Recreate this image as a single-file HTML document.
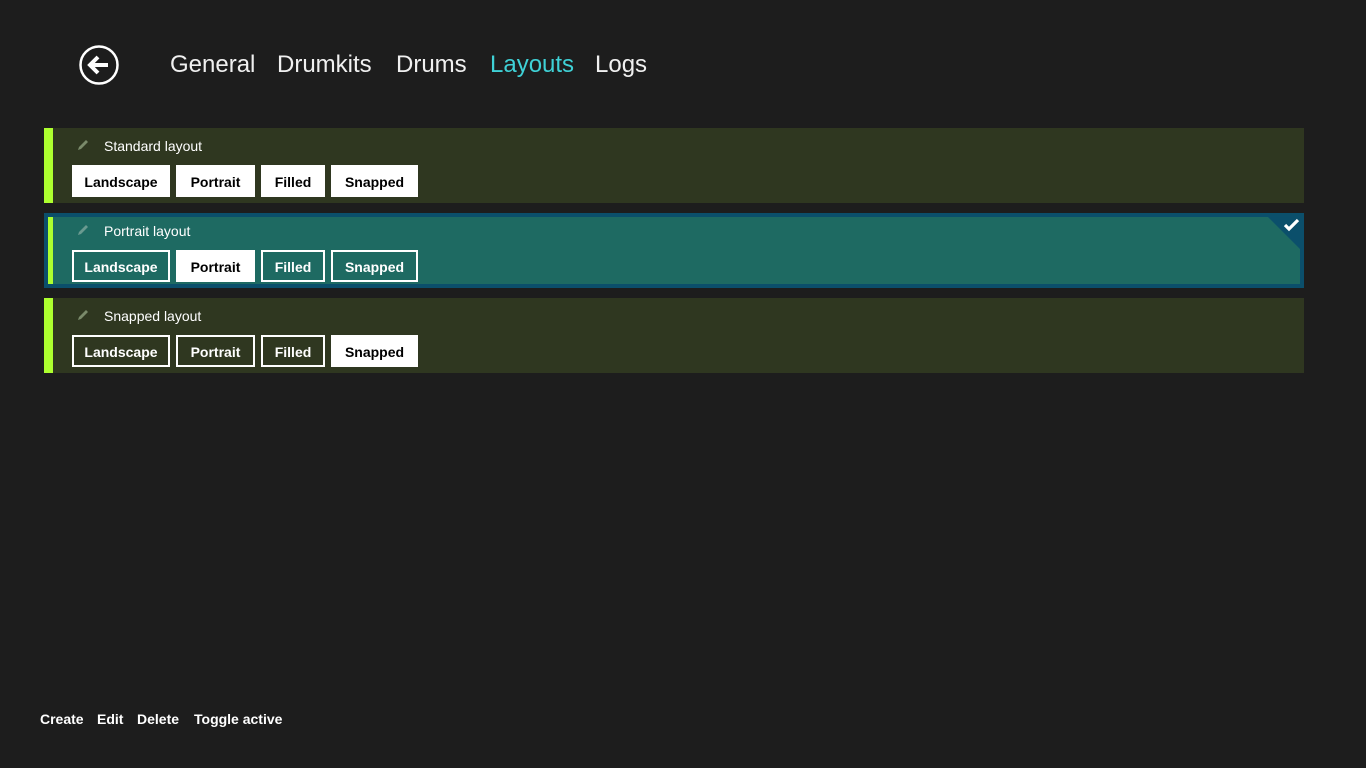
<!DOCTYPE html>
<html><head><meta charset="utf-8"><style>
*{margin:0;padding:0;box-sizing:border-box}
body{width:1366px;height:768px;background:#1d1d1d;font-family:"DejaVu Sans","Liberation Sans",sans-serif;color:#fff;position:relative;overflow:hidden}
.back{position:absolute;left:79px;top:45px;width:40px;height:40px}
.nav{position:absolute;top:51px;font-size:24px;font-weight:300;font-family:"Liberation Sans",sans-serif;color:#f0f0f0}
.item{position:absolute;left:44px;width:1260px;height:75px;background:#2f3720}
.item .bar{position:absolute;left:0;top:0;width:9px;height:75px;background:#adff2f}
.title{position:absolute;left:60px;top:10px;font-size:14px;font-family:"Liberation Sans",sans-serif}
.pen{position:absolute;left:32px;top:10px}
.btn{position:absolute;top:37px;height:32px;border:2px solid #fff;font-size:14px;font-weight:bold;font-family:"Liberation Sans",sans-serif;display:flex;align-items:center;justify-content:center;color:#fff;padding-top:1px}
.btn.on{background:#fff;color:#000}
.sel{background:#0b4f6b}
.sel .inner{position:absolute;left:4px;top:4px;right:4px;bottom:4px;background:#1e6a62}
.sel .bar{left:4px;top:4px;width:5px;height:67px}
.app{position:absolute;top:711px;font-size:14px;font-weight:bold;font-family:"Liberation Sans",sans-serif}
</style></head><body>
<svg class="back" viewBox="0 0 40 40"><circle cx="20" cy="20" r="18.5" fill="none" stroke="#fff" stroke-width="2.5"/><path d="M11 20H29M19 12L11 20L19 28" fill="none" stroke="#fff" stroke-width="4" stroke-linejoin="miter"/></svg>
<div class="nav" style="left:170px">General</div>
<div class="nav" style="left:277px">Drumkits</div>
<div class="nav" style="left:396px">Drums</div>
<div class="nav" style="left:490px;color:#3fd1d6">Layouts</div>
<div class="nav" style="left:595px">Logs</div>

<div class="item" style="top:128px"><div class="bar"></div>
<svg class="pen" width="14" height="14" viewBox="0 0 14 14"><path d="M2 12L3 9L10 2L12 4L5 11Z" fill="#7a8a6a"/></svg>
<div class="title">Standard layout</div>
<div class="btn on" style="left:28px;width:98px">Landscape</div>
<div class="btn on" style="left:132px;width:79px">Portrait</div>
<div class="btn on" style="left:217px;width:64px">Filled</div>
<div class="btn on" style="left:287px;width:87px">Snapped</div>
</div>

<div class="item sel" style="top:213px"><div class="inner"></div><div class="bar"></div>
<svg style="position:absolute;right:0;top:0" width="40" height="40" viewBox="0 0 40 40"><path d="M4 4H36V36Z" fill="#0b4f6b"/><path d="M21 12L25 16L34 7" fill="none" stroke="#fff" stroke-width="3.2"/></svg>
<svg class="pen" width="14" height="14" viewBox="0 0 14 14"><path d="M2 12L3 9L10 2L12 4L5 11Z" fill="#6a9a90"/></svg>
<div class="title">Portrait layout</div>
<div class="btn" style="left:28px;width:98px">Landscape</div>
<div class="btn on" style="left:132px;width:79px">Portrait</div>
<div class="btn" style="left:217px;width:64px">Filled</div>
<div class="btn" style="left:287px;width:87px">Snapped</div>
</div>

<div class="item" style="top:298px"><div class="bar"></div>
<svg class="pen" width="14" height="14" viewBox="0 0 14 14"><path d="M2 12L3 9L10 2L12 4L5 11Z" fill="#7a8a6a"/></svg>
<div class="title">Snapped layout</div>
<div class="btn" style="left:28px;width:98px">Landscape</div>
<div class="btn" style="left:132px;width:79px">Portrait</div>
<div class="btn" style="left:217px;width:64px">Filled</div>
<div class="btn on" style="left:287px;width:87px">Snapped</div>
</div>

<div class="app" style="left:40px">Create</div>
<div class="app" style="left:97px">Edit</div>
<div class="app" style="left:137px">Delete</div>
<div class="app" style="left:194px">Toggle active</div>
</body></html>
